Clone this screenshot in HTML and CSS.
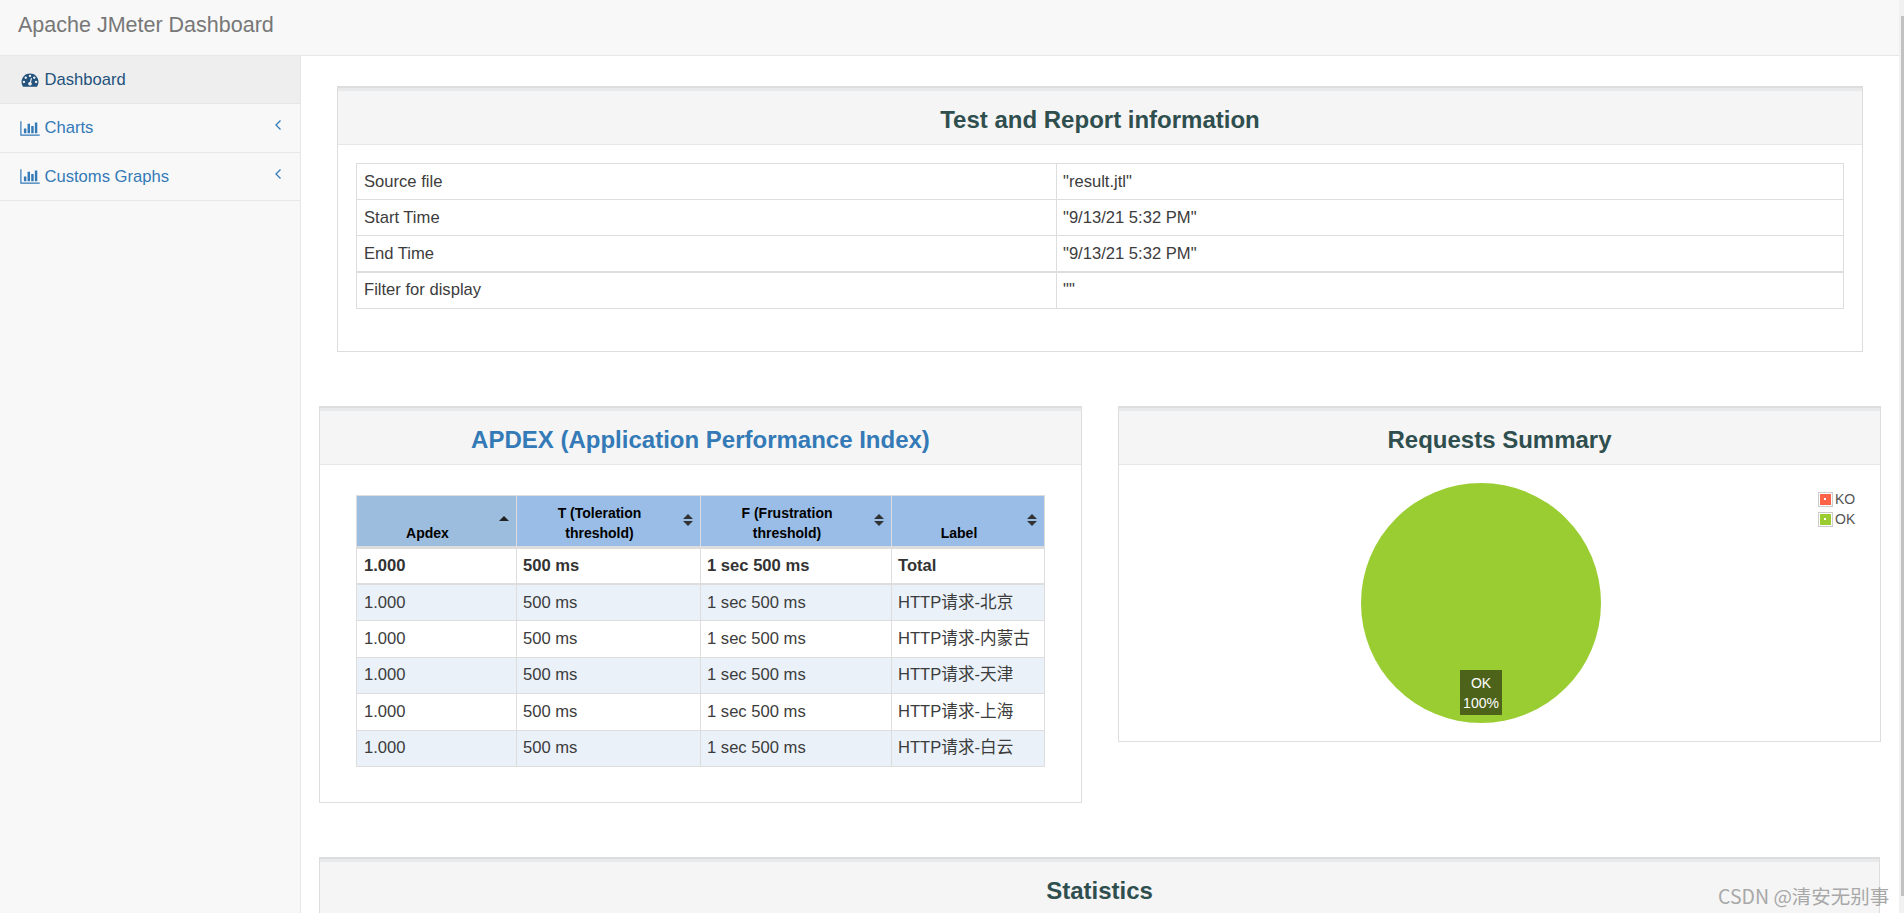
FILE: index.html
```html
<!DOCTYPE html>
<html lang="en">
<head>
<meta charset="utf-8">
<title>Apache JMeter Dashboard</title>
<link rel="stylesheet" href="styles.css">
</head>
<body>
<div class="app">
  <header class="navbar"><span class="brand">Apache JMeter Dashboard</span></header>
  <div class="layout">
    <nav class="sidebar">
      <a class="nav-item active">
        <svg class="nav-icon" viewBox="0 0 1792 1792"><path d="M384 1152q0-53-37.5-90.5t-90.5-37.5-90.5 37.5-37.5 90.5 37.5 90.5 90.5 37.5 90.5-37.5 37.5-90.5zm192-448q0-53-37.5-90.5t-90.5-37.5-90.5 37.5-37.5 90.5 37.5 90.5 90.5 37.5 90.5-37.5 37.5-90.5zm428 481l101-382q6-26-7.5-48.5t-38.5-29.5-48 6.5-30 39.5l-101 382q-60 5-107 43.5t-63 98.5q-20 77 20 146t117 89 146-20 89-117q16-60-6-117t-72-91zm660-33q0-53-37.5-90.5t-90.5-37.5-90.5 37.5-37.5 90.5 37.5 90.5 90.5 37.5 90.5-37.5 37.5-90.5zm-640-640q0-53-37.5-90.5t-90.5-37.5-90.5 37.5-37.5 90.5 37.5 90.5 90.5 37.5 90.5-37.5 37.5-90.5zm448 192q0-53-37.5-90.5t-90.5-37.5-90.5 37.5-37.5 90.5 37.5 90.5 90.5 37.5 90.5-37.5 37.5-90.5zm320 448q0 261-141 483-19 29-54 29h-1402q-35 0-54-29-141-221-141-483 0-182 71-348t191-286 286-191 348-71 348 71 286 191 191 286 71 348z"/></svg>
        <span>Dashboard</span>
      </a>
      <a class="nav-item nav-tall">
        <svg class="nav-icon" viewBox="0 0 2048 1792"><path d="M640 896v512h-256v-512h256zm384-512v1024h-256v-1024h256zm1024 1152v128h-2048v-1536h128v1408h1920zm-640-896v768h-256v-768h256zm384-384v1152h-256v-1152h256z"/></svg>
        <span>Charts</span>
        <svg class="chevron" viewBox="0 0 8 12"><path d="M6.5 1.5 2 6l4.500 4.500"/></svg>
      </a>
      <a class="nav-item">
        <svg class="nav-icon" viewBox="0 0 2048 1792"><path d="M640 896v512h-256v-512h256zm384-512v1024h-256v-1024h256zm1024 1152v128h-2048v-1536h128v1408h1920zm-640-896v768h-256v-768h256zm384-384v1152h-256v-1152h256z"/></svg>
        <span>Customs Graphs</span>
        <svg class="chevron" viewBox="0 0 8 12"><path d="M6.5 1.5 2 6l4.500 4.500"/></svg>
      </a>
    </nav>
    <main class="content">
      <section class="panel panel-info">
        <h2 class="panel-heading">Test and Report information</h2>
        <div class="panel-body body-info">
          <table class="grid info-table">
            <colgroup><col class="info-c1"><col></colgroup>
            <tbody>
              <tr><td>Source file</td><td>"result.jtl"</td></tr>
              <tr><td>Start Time</td><td>"9/13/21 5:32 PM"</td></tr>
              <tr class="thick"><td>End Time</td><td>"9/13/21 5:32 PM"</td></tr>
              <tr><td>Filter for display</td><td>""</td></tr>
            </tbody>
          </table>
        </div>
      </section>
      <div class="two-col">
        <section class="panel">
          <h2 class="panel-heading link">APDEX (Application Performance Index)</h2>
          <div class="panel-body body-apdex">
            <table class="grid apdex-table">
              <colgroup><col class="a1"><col class="a2"><col class="a3"><col class="a4"></colgroup>
              <thead>
                <tr>
                  <th class="sorted">Apdex<i class="sort-up"></i></th>
                  <th>T (Toleration threshold)<i class="sort-both"></i></th>
                  <th>F (Frustration threshold)<i class="sort-both"></i></th>
                  <th>Label<i class="sort-both"></i></th>
                </tr>
              </thead>
              <tbody>
                <tr class="total"><td>1.000</td><td>500 ms</td><td>1 sec 500 ms</td><td>Total</td></tr>
                <tr class="odd"><td>1.000</td><td>500 ms</td><td>1 sec 500 ms</td><td>HTTP请求-北京</td></tr>
                <tr><td>1.000</td><td>500 ms</td><td>1 sec 500 ms</td><td>HTTP请求-内蒙古</td></tr>
                <tr class="odd"><td>1.000</td><td>500 ms</td><td>1 sec 500 ms</td><td>HTTP请求-天津</td></tr>
                <tr><td>1.000</td><td>500 ms</td><td>1 sec 500 ms</td><td>HTTP请求-上海</td></tr>
                <tr class="odd"><td>1.000</td><td>500 ms</td><td>1 sec 500 ms</td><td>HTTP请求-白云</td></tr>
              </tbody>
            </table>
          </div>
        </section>
        <section class="panel panel-summary">
          <h2 class="panel-heading">Requests Summary</h2>
          <div class="chart">
            <div class="pie"></div>
            <div class="pie-label">OK<br>100%</div>
            <ul class="legend">
              <li><span class="swatch ko"></span>KO</li>
              <li><span class="swatch ok"></span>OK</li>
            </ul>
          </div>
        </section>
      </div>
      <section class="panel panel-stats">
        <h2 class="panel-heading">Statistics</h2>
      </section>
    </main>
  </div>
  <div class="scrollbar"><div class="thumb"></div></div>
  <div class="watermark">CSDN @清安无别事</div>
</div>
</body>
</html>
```

FILE: styles.css
```css
* { box-sizing: border-box; }
html, body { margin: 0; height: 100%; overflow: hidden; background: #fff; }
body {
  font-family: "Liberation Sans", Arial, "Noto Sans CJK SC", sans-serif;
  font-size: 16.6px;
  color: #3c3c3c;
}
.app { position: relative; height: 913px; overflow: hidden; padding-right: 5px; }
.navbar {
  height: 56px;
  background: #f8f8f8;
  border-bottom: 1px solid #e7e7e7;
  padding: 0 18px;
  display: flex;
  align-items: center;
}
.brand { font-size: 21.5px; color: #777; position: relative; top: -2px; }
.layout { display: flex; height: 857px; }
.sidebar {
  width: 301px;
  flex: none;
  background: #f8f8f8;
  border-right: 1px solid #e7e7e7;
}
.nav-item {
  display: flex;
  align-items: center;
  height: 48px;
  padding: 0 18px 0 20px;
  border-bottom: 1px solid #e7e7e7;
  color: #337ab7;
}
.nav-tall { height: 49px; }
.nav-item.active { background: #eee; color: #23527c; }
.nav-icon { width: 20px; height: 17px; fill: currentColor; margin-right: 4.5px; flex: none; }
.chevron {
  width: 8px; height: 12px;
  margin-left: auto;
  margin-right: 0;
  position: relative; top: -3px;
  fill: none; stroke: currentColor; stroke-width: 1.300;
}
.content { flex: 1; min-width: 0; padding: 30px 19px 0 18px; }
.panel { background: #fff; border: 1px solid #ddd; border-top-width: 2px; }
.panel-info { margin: 0 17px 54px 18px; height: 266px; }
.panel-heading {
  margin: 0;
  height: 57px;
  background: #f5f5f5;
  border-top: 3px solid #e7e9eb;
  border-bottom: 1px solid #e7e7e7;
  color: #2f4f4f;
  font-size: 24px;
  font-weight: 700;
  line-height: 58px;
  text-align: center;
}
.panel-heading.link { color: #337ab7; }
.body-info { padding: 18px 18px 0 18px; }
.grid { width: 100%; border-collapse: collapse; table-layout: fixed; }
.grid td, .grid th { border: 1px solid #ddd; padding: 0 6px; line-height: 20px; }
.grid td:first-child { padding-left: 7px; }
.info-c1 { width: 700px; }
.info-table td { height: 36.2px; }
.info-table tr.thick td { border-bottom-width: 2px; }
.two-col {
  display: grid;
  grid-template-columns: 763px 763px;
  column-gap: 36px;
  align-items: start;
  margin-bottom: 54px;
}
.body-apdex { padding: 30px 36px 35px 36px; }
.a1 { width: 160px; }
.a2 { width: 184px; }
.a3 { width: 191px; }
.a4 { width: 153px; }
.apdex-table { height: 272px; }
.apdex-table th {
  position: relative;
  height: 52px;
  background: #99bde6;
  color: #000;
  font-size: 14px;
  font-weight: 700;
  line-height: 20px;
  text-align: center;
  vertical-align: bottom;
  padding: 4px 30px 3px 12px;
  border-color: #ddd;
  border-bottom: 3px solid #ddd;
}
.apdex-table th.sorted { background: #9dbddf; }
.apdex-table td { height: 36px; }
.apdex-table .total td { font-weight: 700; border-bottom-width: 2px; color: #333; }
.apdex-table .odd td { background: #eaf1f9; }
.sort-up, .sort-both { position: absolute; right: 7px; top: 18px; width: 10px; height: 12px; }
.sort-up::before, .sort-both::before, .sort-both::after {
  content: "";
  position: absolute;
  left: 0;
  border-left: 5px solid transparent;
  border-right: 5px solid transparent;
}
.sort-up::before { top: 2px; border-bottom: 5px solid #222; }
.sort-both::before { top: 0; border-bottom: 5px solid #333; }
.sort-both::after { bottom: 0; border-top: 5px solid #333; }
.panel-summary { height: 336px; }
.chart { position: relative; height: 277px; }
.pie {
  position: absolute;
  left: 242px; top: 18px;
  width: 240px; height: 240px;
  border-radius: 50%;
  background: #9acd32;
}
.pie-label {
  position: absolute;
  left: 341px; top: 205px;
  width: 42px; height: 45px;
  background: #4e631a;
  color: #fff;
  font-size: 14px;
  line-height: 20px;
  text-align: center;
  padding-top: 3px;
}
.legend {
  position: absolute;
  left: 699px; top: 24px;
  margin: 0; padding: 0;
  list-style: none;
  font-size: 14px;
  color: #545454;
}
.legend li { display: flex; align-items: center; height: 20px; }
.swatch {
  width: 15px; height: 15px;
  border: 1px solid #ccc;
  padding: 1px;
  margin-right: 2px;
  background-clip: content-box;
  display: block;
  position: relative;
}
.swatch::after {
  content: "";
  position: absolute;
  left: 5px; top: 5px;
  width: 2px; height: 2px;
  background: #fff;
}
.swatch.ko { background-color: #ff6347; }
.swatch.ok { background-color: #9acd32; }
.panel-stats { height: 120px; }
.scrollbar { position: absolute; top: 0; right: 0; width: 5px; height: 913px; background: #f1f1f1; }
.thumb { position: absolute; top: 16px; right: 0; width: 3px; height: 880px; background: #c1c1c1; }
.watermark {
  position: absolute;
  left: 1718px; top: 885px;
  font-family: "Noto Sans CJK SC", sans-serif;
  font-size: 19.5px;
  line-height: 22px;
  color: #a8a8a8;
  white-space: nowrap;
}
```
